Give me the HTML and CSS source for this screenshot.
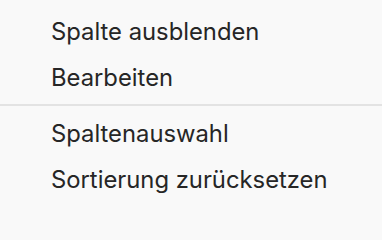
FILE: index.html
```html
<!DOCTYPE html>
<html lang="de">
<head>
<meta charset="utf-8">
<title>Menü</title>
<link rel="stylesheet" href="styles.css">
</head>
<body>
<div class="menu">
  <div class="item">Spalte ausblenden</div>
  <div class="item">Bearbeiten</div>
  <div class="sep"></div>
  <div class="item">Spaltenauswahl</div>
  <div class="item">Sortierung zurücksetzen</div>
</div>
</body>
</html>
```
FILE: styles.css
```css
html, body {
  margin: 0;
  padding: 0;
  background: #f9f9f9;
}
.menu {
  display: flex;
  flex-direction: column;
  padding-top: 8px;
  width: 382px;
  height: 210px;
  box-sizing: border-box;
  font-family: Inter, "Liberation Sans", sans-serif;
  font-size: 23.8px;
  color: #262626;
}
.item {
  height: 46px;
  display: flex;
  align-items: center;
  padding-left: 51px;
}
.sep {
  height: 2px;
  margin: 4px 0;
  background: #e3e3e3;
}
```
